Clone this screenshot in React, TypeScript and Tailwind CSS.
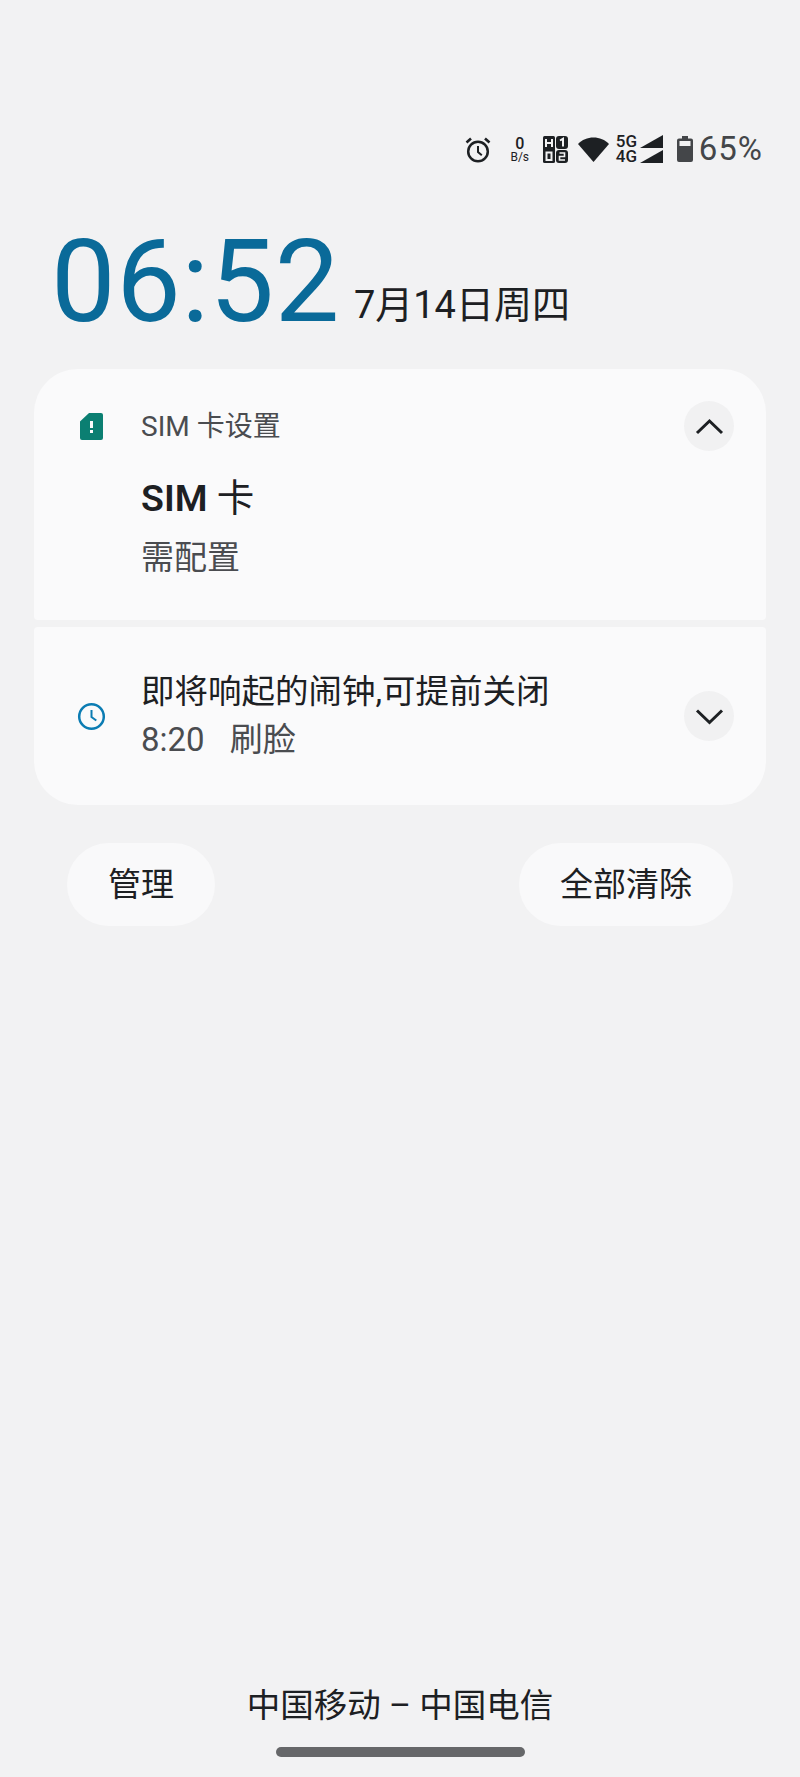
import React from "react";

const font = { fontFamily: 'Roboto, "Noto Sans CJK SC", sans-serif' };

function Alarm() {
  return (
    <svg width="26" height="27" viewBox="0 0 26 27" fill="none" stroke="#1d2023">
      <circle cx="13" cy="15.500" r="9.800" strokeWidth="2.500" />
      <path d="M13 10v6l3.800 3.200" strokeWidth="2" />
      <path d="M1.500 6.500 6 2.500M24.500 6.500 20 2.500" strokeWidth="2.600" />
    </svg>
  );
}

function HD() {
  return (
    <svg width="25" height="27" viewBox="0 0 25 27">
      <rect x="0" y="0" width="12" height="27" rx="1.500" fill="#1d2023" />
      <rect x="13" y="0" width="12" height="13" rx="3" fill="#1d2023" />
      <rect x="13" y="14" width="12" height="13" rx="3" fill="#1d2023" />
      <path d="M3 3v8M9 3v8M3 7h6" stroke="#f2f2f3" strokeWidth="2" fill="none" />
      <rect x="3.500" y="16.500" width="5" height="7.500" stroke="#f2f2f3" strokeWidth="2" fill="none" />
      <path d="M17 4.500 20 2.800V10.500" stroke="#f2f2f3" strokeWidth="2" fill="none" />
      <path d="M16.500 17h5v3.500h-5V24h5.500" stroke="#f2f2f3" strokeWidth="1.600" fill="none" />
    </svg>
  );
}

function Wifi() {
  return (
    <svg width="31" height="25" viewBox="0 0 31 25">
      <path d="M0 7C4 2.800 9.500.5 15.500.5S27 2.800 31 7L15.500 25z" fill="#1d2023" />
    </svg>
  );
}

function Signal() {
  return (
    <svg width="23" height="13" viewBox="0 0 23 13">
      <path d="M23 0v13H0z" fill="#1d2023" />
    </svg>
  );
}

function Battery() {
  return (
    <svg width="16" height="26" viewBox="0 0 16 26">
      <path d="M5 0h6v2.500h3a2 2 0 0 1 2 2V24a2 2 0 0 1-2 2H2a2 2 0 0 1-2-2V4.500a2 2 0 0 1 2-2h3z" fill="#444649" />
      <rect x="2.500" y="5" width="11" height="5" fill="#f2f2f3" />
    </svg>
  );
}

function Sim() {
  return (
    <svg width="23" height="27" viewBox="0 0 23 27">
      <path d="M9 0h12a2 2 0 0 1 2 2v23a2 2 0 0 1-2 2H2a2 2 0 0 1-2-2V8.500z" fill="#0b7f72" />
      <path d="M11.500 8v7" stroke="#fafafb" strokeWidth="3" />
      <rect x="10" y="17" width="3" height="3" fill="#fafafb" />
    </svg>
  );
}

function Clock() {
  return (
    <svg width="29" height="29" viewBox="0 0 29 29" fill="none" stroke="#0b7cb3">
      <circle cx="14.500" cy="14.500" r="12.300" strokeWidth="2.500" />
      <path d="M14.500 8v7l4.800 3.500" strokeWidth="2" />
    </svg>
  );
}

function Chevron({ up }: { up?: boolean }) {
  return (
    <div className="flex h-[50px] w-[50px] shrink-0 items-center justify-center rounded-full bg-[#f1f1f2]">
      <svg width="29" height="17" viewBox="0 0 29 17" fill="none" stroke="#1d2023" strokeWidth="3">
        <path d={up ? "M2 15 14.500 3 27 15" : "M2 2.500l12.500 12L27 2.500"} />
      </svg>
    </div>
  );
}

export default function App() {
  return (
    <div style={font} className="relative flex h-[1777px] w-[800px] flex-col overflow-hidden bg-[#f2f2f3]">
      <div className="mt-[133px] flex h-[32px] items-center justify-end pr-[37px]">
        <Alarm />
        <div className="ml-[20px] flex w-[18px] flex-col items-center text-[#1d2023]">
          <span className="text-[16px] leading-[15px] font-medium">0</span>
          <span className="text-[12px] leading-[12px]">B/s</span>
        </div>
        <div className="ml-[14px]"><HD /></div>
        <div className="ml-[10px]"><Wifi /></div>
        <div className="ml-[7px] flex items-center">
          <span className="w-[24px] text-[17px] leading-[15px] font-medium whitespace-pre-line text-[#1d2023]">{"5G\n4G"}</span>
          <div className="flex flex-col gap-[2px]">
            <Signal />
            <Signal />
          </div>
        </div>
        <div className="ml-[14px]"><Battery /></div>
        <span className="ml-[6px] text-[33px] leading-[32px] tracking-[1px] text-[#444649]">65%</span>
      </div>

      <div className="mt-[49px] flex h-[136px] items-baseline pl-[51px]">
        <span className="text-[115px] leading-[136px] tracking-[0.500px] text-[#0a6a99]">06:52</span>
        <span className="relative -top-[3px] ml-[14px] text-[38px] text-[#1d2023]">7月14日周四</span>
      </div>

      <div className="mx-[34px] mt-[19px] flex flex-col gap-[7px]">
        <div className="h-[251px] rounded-t-[44px] rounded-b-[4px] bg-[#fafafb] pt-[31px]">
          <div className="flex h-[52px] items-center pr-[32px]">
            <div className="ml-[46px] flex w-[61px] shrink-0"><Sim /></div>
            <span className="relative top-[1px] flex-1 text-[28px] text-[#4a4c50]">SIM 卡设置</span>
            <Chevron up />
          </div>
          <div className="mt-[24px] pl-[107px] text-[37.500px] leading-[44px] text-[#1d2023]"><span className="font-semibold">SIM</span> 卡</div>
          <div className="mt-[16px] pl-[107px] text-[33px] leading-[44px] text-[#4a4c50]">需配置</div>
        </div>
        <div className="flex h-[178px] items-center rounded-t-[4px] rounded-b-[44px] bg-[#fafafb] pr-[32px]">
          <div className="ml-[43px] flex w-[64px] shrink-0"><Clock /></div>
          <div className="flex-1">
            <div className="text-[33.500px] leading-[48px] text-[#1d2023]">即将响起的闹钟,可提前关闭</div>
            <div className="text-[33px] leading-[48px] text-[#4a4c50]">8:20<span className="ml-[25px]">刷脸</span></div>
          </div>
          <Chevron />
        </div>
      </div>

      <div className="mt-[38px] flex justify-between px-[67px]">
        <div className="flex h-[83px] w-[148px] items-center justify-center rounded-full bg-[#f9f9fa] text-[33px] text-[#1d2023]">管理</div>
        <div className="flex h-[83px] w-[214px] items-center justify-center rounded-full bg-[#f9f9fa] text-[33px] text-[#1d2023]">全部清除</div>
      </div>

      <div className="mt-auto flex flex-col items-center pb-[20px]">
        <div className="text-[33.500px] leading-[44px] text-[#1d2023]">中国移动 – 中国电信</div>
        <div className="mt-[19px] h-[10px] w-[249px] rounded-full bg-[#666769]" />
      </div>
    </div>
  );
}
